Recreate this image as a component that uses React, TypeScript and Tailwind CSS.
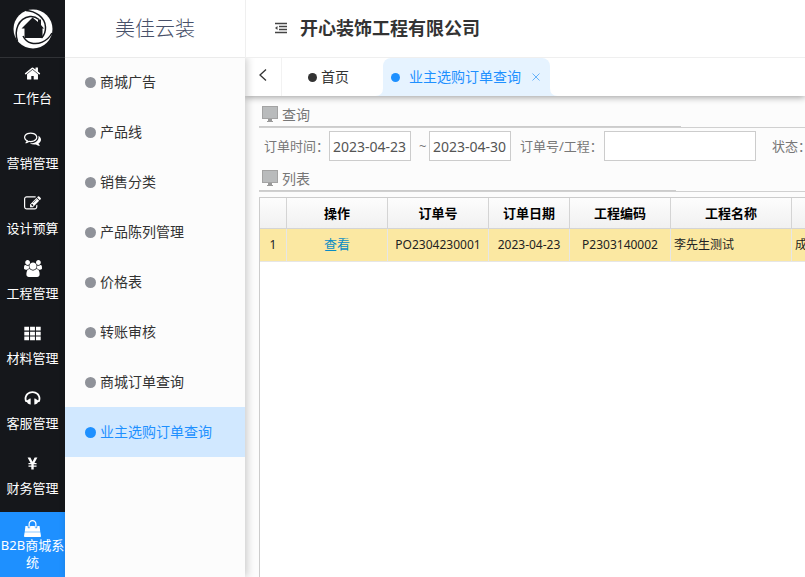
import React from "react";

const FA = {
  home: "M1472 992v480q0 26-19 45t-45 19h-384v-384h-256v384h-384q-26 0-45-19t-19-45v-480q0-1 .5-3t.5-3l575-474 575 474q1 2 1 6zm223-69l-62 74q-8 9-21 11h-3q-13 0-21-7l-692-577-692 577q-12 8-24 7-13-2-21-11l-62-74q-8-10-7-23.5t11-21.5l719-599q32-26 76-26t76 26l244 204v-195q0-14 9-23t23-9h192q14 0 23 9t9 23v408l219 182q10 8 11 21.5t-7 23.5z",
  comments:
    "M704 384q-153 0-286 52t-211.5 141-78.5 191q0 82 53 158t149 132l97 56-35 84q34-20 62-39l44-31 53 10q78 14 153 14 153 0 286-52t211.5-141 78.5-191-78.5-191-211.5-141-286-52zm0-128q191 0 353.5 68.5t256.5 186.5 94 257-94 257-256.5 186.5-353.5 68.5q-86 0-176-16-124 88-278 128-36 9-86 16h-3q-11 0-20.5-8t-11.5-21q-1-3-1-6.5t.5-6.5 2-6l2.5-5 3.5-5.5 4-5 4.5-5 4-4.5q5-6 23-25t26-29.5 22.5-29 25-38.5 20.5-44q-124-72-195-177t-71-224q0-139 94-257t256.5-186.5 353.5-68.5zm822 1169q10 24 20.5 44t25 38.5 22.5 29 26 29.5 23 25q1 1 4 4.5t4.5 5 4 5 3.5 5.5l2.5 5t2 6 .5 6.5-1 6.5q-3 14-13 22t-22 7q-50-7-86-16-154-40-278-128-90 16-176 16-271 0-472-132 58 4 88 4 161 0 309-45t264-129q125-92 192-212t67-254q0-77-23-152 129 71 204 178t75 230q0 120-71 224.5t-195 176.5z",
  edit: "M888 1184l116-116-152-152-116 116v56h96v96h56zm440-720q-16-16-33 1l-350 350q-17 17-1 33t33-1l350-350q17-17 1-33zm80 594v190q0 119-84.5 203.5t-203.5 84.5h-832q-119 0-203.5-84.5t-84.5-203.5v-832q0-119 84.5-203.5t203.5-84.5h832q63 0 117 25 15 7 18 23 3 17-9 29l-49 49q-14 14-32 8-23-6-45-6h-832q-66 0-113 47t-47 113v832q0 66 47 113t113 47h832q66 0 113-47t47-113v-126q0-13 9-22l64-64q15-15 35-7t20 29zm-96-738l288 288-672 672h-288v-288zm444 132l-92 92-288-288 92-92q28-28 68-28t68 28l152 152q28 28 28 68t-28 68z",
  users:
    "M593 896q-162 5-265 128h-134q-82 0-138-40.5t-56-118.5q0-353 124-353 6 0 43.5 21t97.5 42.5 119 21.5q67 0 133-23-5 37-5 66 0 139 81 256zm1071 637q0 120-73 189.5t-194 69.5h-874q-121 0-194-69.5t-73-189.5q0-53 3.5-103.5t14-109 26.5-108.5 43-97.5 62-81 85.5-53.5 111.5-20q10 0 43 21.5t73 48 107 48 135 21.5 135-21.5 107-48 73-48 43-21.5q61 0 111.5 20t85.5 53.5 62 81 43 97.5 26.5 108.5 14 109 3.5 103.5zm-1024-1277q0 106-75 181t-181 75-181-75-75-181 75-181 181-75 181 75 75 181zm704 384q0 159-112.5 271.5t-271.5 112.5-271.5-112.5-112.5-271.5 112.5-271.5 271.5-112.5 271.5 112.5 112.5 271.5zm576 225q0 78-56 118.5t-138 40.5h-134q-103-123-265-128 81-117 81-256 0-29-5-66 66 23 133 23 59 0 119-21.5t97.5-42.5 43.5-21q124 0 124 353zm-128-609q0 106-75 181t-181 75-181-75-75-181 75-181 181-75 181 75 75 181z",
  grid: "M32 192h500v400H32zM640 192h512v400H640zM1260 192h500v400h-500zM32 700h500v400H32zM640 700h512v400H640zM1260 700h500v400h-500zM32 1208h500v400H32zM640 1208h512v400H640zM1260 1208h500v400h-500z",
  headphones:
    "M1728 886q0 166-60 314l-20 49-185 33q-22 83-90.5 136.5t-156.5 53.5v32q0 14-9 23t-23 9h-64q-14 0-23-9t-9-23v-576q0-14 9-23t23-9h64q14 0 23 9t9 23v32q71 0 130 35.5t93 95.5l68-12q29-95 29-193 0-148-88-279t-236.5-209-315.5-78-315.5 78-236.5 209-88 279q0 98 29 193l68 12q34-60 93-95.5t130-35.5v-32q0-14 9-23t23-9h64q14 0 23 9t9 23v576q0 14-9 23t-23 9h-64q-14 0-23-9t-9-23v-32q-88 0-156.5-53.5t-90.5-136.5l-185-33-20-49q-60-148-60-314 0-151 67-291t179-242.5 266-163.5 320-61 320 61 266 163.5 179 242.5 67 291z",
  yen: "M380 256h290l226 450 226-450h290l-310 580h220v150h-300v110h300v150h-300v290H770v-290H470v-150h300v-110H470V836h220z",
  bag: "M64 1290h1664l60 400q4 40-22 70t-62 30H88q-36 0-62-30t-22-70zM150 620h240v130q0 50 40 85t90 35 90-35 40-85V620h492v130q0 50 40 85t90 35 90-35 40-85V620h240l72 620H78zM896 0q180 0 300 125t120 290v330q0 26-19 45t-45 19-45-19-19-45V415q0-120-86-205T896 125t-206 85-86 205v330q0 26-19 45t-45 19-45-19-19-45V415q0-165 120-290T896 0z",
};

const modules = [
  { name: "工作台", icon: FA.home },
  { name: "营销管理", icon: FA.comments },
  { name: "设计预算", icon: FA.edit },
  { name: "工程管理", icon: FA.users, wide: true },
  { name: "材料管理", icon: FA.grid },
  { name: "客服管理", icon: FA.headphones },
  { name: "财务管理", icon: FA.yen },
];

const menus = [
  "商城广告",
  "产品线",
  "销售分类",
  "产品陈列管理",
  "价格表",
  "转账审核",
  "商城订单查询",
  "业主选购订单查询",
];

function Icon({ d, wide }: { d: string; wide?: boolean }) {
  return (
    <svg
      viewBox={wide ? "0 0 1920 1792" : "0 0 1792 1792"}
      className={wide ? "h-[17px] w-[18px]" : "size-[17px]"}
      fill="currentColor"
      aria-hidden="true"
    >
      <path d={d} />
    </svg>
  );
}

function Logo() {
  return (
    <svg viewBox="0 0 40 40" className="size-10" aria-hidden="true">
      <circle cx="20" cy="20" r="19.5" fill="#fff" />
      <path
        d="M19.500 8.500 8.500 19.500h3V29h18v-9.500H31l-3-3.500v-5.500h-3V13z"
        fill="#15171b"
      />
      <g fill="none" stroke="#15171b" strokeWidth="1.500">
        <path d="M13 1.500C22 2 32 8 32.500 18c.2 5-1 8-4 11" />
        <path d="M39 24c-5 9-14 12-21 10-4-1-6-3-8-7" />
        <path d="M4.500 32C1 22 5 9 17 7.500c3-.3 6 .5 9 3" />
      </g>
    </svg>
  );
}

// Section heading with monitor icon
function SectionTitle({ title, line }: { title: string; line: string }) {
  return (
    <div className="border-b border-[#d0d0d0]">
      <h2
        className={`flex h-6 items-center gap-1 border-b border-[#ccc] pl-[3px] text-sm text-[#777] ${line}`}
      >
        <svg viewBox="0 0 16 16" className="mb-0.5 size-4" aria-hidden="true">
          <path d="M0 0h16v13H0z" fill="#a3a3a3" />
          <path d="M1 1h14v11H1z" fill="#b9bbbc" />
          <path d="M6 13h4v2h1v1H5v-1h1z" fill="#999" />
        </svg>
        {title}
      </h2>
    </div>
  );
}

const columns = [
  { name: "", width: "w-[27px]" },
  { name: "操作", width: "w-[101px]" },
  { name: "订单号", width: "w-[101px]" },
  { name: "订单日期", width: "w-[81px]" },
  { name: "工程编码", width: "w-[101px]" },
  { name: "工程名称", width: "w-[121px]" },
  { name: "", width: "w-[160px]" },
];

export default function App() {
  return (
    <div className="flex min-h-screen overflow-hidden bg-white font-['Noto_Sans','Noto_Sans_CJK_SC',sans-serif] text-sm text-[#333]">
      {/* Module rail */}
      <nav className="flex w-[65px] shrink-0 flex-col bg-[#15171b] text-[13px] text-white">
        <div className="-mb-px flex h-[58px] shrink-0 items-center justify-center border-b border-[#303236]">
          <Logo />
        </div>
        {modules.map((m) => (
          <a
            key={m.name}
            href="#"
            className="flex h-[65px] flex-col items-center gap-[7px] whitespace-nowrap pt-2 leading-[18px]"
          >
            <Icon d={m.icon} wide={m.wide} />
            {m.name}
          </a>
        ))}
        <a
          href="#"
          className="flex h-[65px] flex-col items-center bg-[#1e90ff] pt-2 text-center leading-[17px]"
        >
          <Icon d={FA.bag} />
          <span>
            B2B商城系
            <br />统
          </span>
        </a>
      </nav>

      {/* Sub menu */}
      <aside className="relative z-10 flex w-[180px] shrink-0 flex-col">
        <div className="relative z-10 -mb-px flex h-[58px] shrink-0 items-center justify-center border-b border-[#ebebeb] bg-white text-xl font-light text-[#475069]">
          美佳云装
        </div>
        <nav className="flex-1 bg-[#fcfcfc] shadow-[2px_0_8px_rgba(0,0,0,0.2)]">
          {menus.map((name, i) => (
            <a
              key={name}
              href="#"
              className={
                i === menus.length - 1
                  ? "flex h-[50px] items-center gap-1 bg-[#d1e8ff] pl-5 text-[#1e90ff]"
                  : "flex h-[50px] items-center gap-1 pl-5"
              }
            >
              <span
                className={
                  i === menus.length - 1
                    ? "size-[11px] rounded-full bg-[#1e90ff]"
                    : "size-[11px] rounded-full bg-[#8f9299]"
                }
              />
              {name}
            </a>
          ))}
        </nav>
      </aside>

      <main className="flex min-w-0 flex-1 flex-col">
        <header className="relative z-20 flex h-[58px] items-center gap-3 border-b border-l border-[#efefef] bg-white pb-0.5 pl-7">
          <button aria-label="收起菜单">
            <svg viewBox="0 0 14 12" className="h-3 w-[14px]" stroke="#444" strokeWidth="1.500">
              <path d="M1 1.500h12M5 4.500h8M5 7.500h8M1 10.500h12" />
              <path d="M3.500 4v4L1 6z" fill="#444" stroke="none" />
            </svg>
          </button>
          <h1 className="text-lg font-bold">开心装饰工程有限公司</h1>
        </header>

        {/* Tabs */}
        <div className="relative flex h-[38px] shrink-0 bg-white shadow-[0_1px_7px_rgba(0,0,0,0.4)]">
          <button
            aria-label="向左"
            className="flex w-[37px] items-center justify-center border-r border-[#f2f2f2] pb-1"
          >
            <svg viewBox="0 0 8 12" className="h-3 w-2" fill="none" stroke="#333" strokeWidth="1.300">
              <path d="M7 .5 1 6l6 5.500" />
            </svg>
          </button>
          <a href="#" className="flex w-[101px] items-center gap-1 pl-[26px]">
            <span className="size-[9px] rounded-full bg-[#333]" />
            首页
          </a>
          <div className="relative flex w-[167px] items-center rounded-t-lg bg-[#e6f3ff] pl-2 text-[#1e90ff]">
            <svg viewBox="0 0 8 8" className="absolute bottom-0 right-full size-2" fill="#e6f3ff">
              <path d="M8 0v8H0q8 0 8-8" />
            </svg>
            <svg viewBox="0 0 8 8" className="absolute bottom-0 left-full size-2" fill="#e6f3ff">
              <path d="M0 0v8h8q-8 0-8-8" />
            </svg>
            <span className="size-[9px] rounded-full bg-[#1e90ff]" />
            <a href="#" className="ml-[9px] whitespace-nowrap">业主选购订单查询</a>
            <button aria-label="关闭" className="ml-[11px]">
              <svg viewBox="0 0 8 8" className="size-2" stroke="#68b3fa">
                <path d="m.5.5 7 7m0-7-7 7" />
              </svg>
            </button>
          </div>
        </div>

        <section className="flex flex-1 flex-col bg-[#fcfcfc] pl-[14px] pt-[7px]">
          <SectionTitle title="查询" line="w-[422px]" />
          <form className="flex h-9 items-center whitespace-nowrap pl-[5px] text-[13px] text-[#777] *:shrink-0">
            <label htmlFor="from" className="w-[65px]">订单时间：</label>
            <input
              id="from"
              defaultValue="2023-04-23"
              className="h-[30px] w-[82px] border border-[#ccc] bg-white px-[3px] text-sm text-[#555]"
            />
            <label htmlFor="to" className="w-[18px] pl-2">~</label>
            <input
              id="to"
              defaultValue="2023-04-30"
              className="h-[30px] w-[82px] border border-[#ccc] bg-white px-[3px] text-sm text-[#555]"
            />
            <label htmlFor="order" className="w-[93px] pl-[9px]">订单号/工程：</label>
            <input
              id="order"
              className="h-[30px] w-[152px] border border-[#ccc] bg-white px-[3px]"
            />
            <span className="pl-4">状态：</span>
          </form>
          <div className="pt-[3px]">
            <SectionTitle title="列表" line="w-[417px]" />
          </div>

          {/* Order list */}
          <div className="mt-[5px] flex-1 overflow-hidden border-l border-t border-[#ccc] bg-white">
            <table className="w-[692px] table-fixed border-separate border-spacing-0 whitespace-nowrap text-[#222]">
              <thead>
                <tr className="h-[31px] bg-linear-to-b from-[#fdfdfd] to-[#f0f0f0] text-[13px] text-black">
                  {columns.map((c, i) => (
                    <th key={i} className={`border-b border-r border-[#d4d4d4] p-0 font-bold ${c.width}`}>
                      {c.name}
                    </th>
                  ))}
                </tr>
              </thead>
              <tbody>
                <tr className="h-[33px] bg-[#fbe8a2] text-center text-xs *:border-b *:border-r *:border-[#e6e6e6] *:p-0">
                  <td>1</td>
                  <td>
                    <a href="#" className="text-[13px] text-[#0a8cc4]">查看</a>
                  </td>
                  <td>PO2304230001</td>
                  <td>2023-04-23</td>
                  <td>P2303140002</td>
                  <td className="text-left"><span className="pl-[3px]">李先生测试</span></td>
                  <td className="text-left"><span className="pl-[3px]">成</span></td>
                </tr>
              </tbody>
            </table>
          </div>
        </section>
      </main>
    </div>
  );
}
